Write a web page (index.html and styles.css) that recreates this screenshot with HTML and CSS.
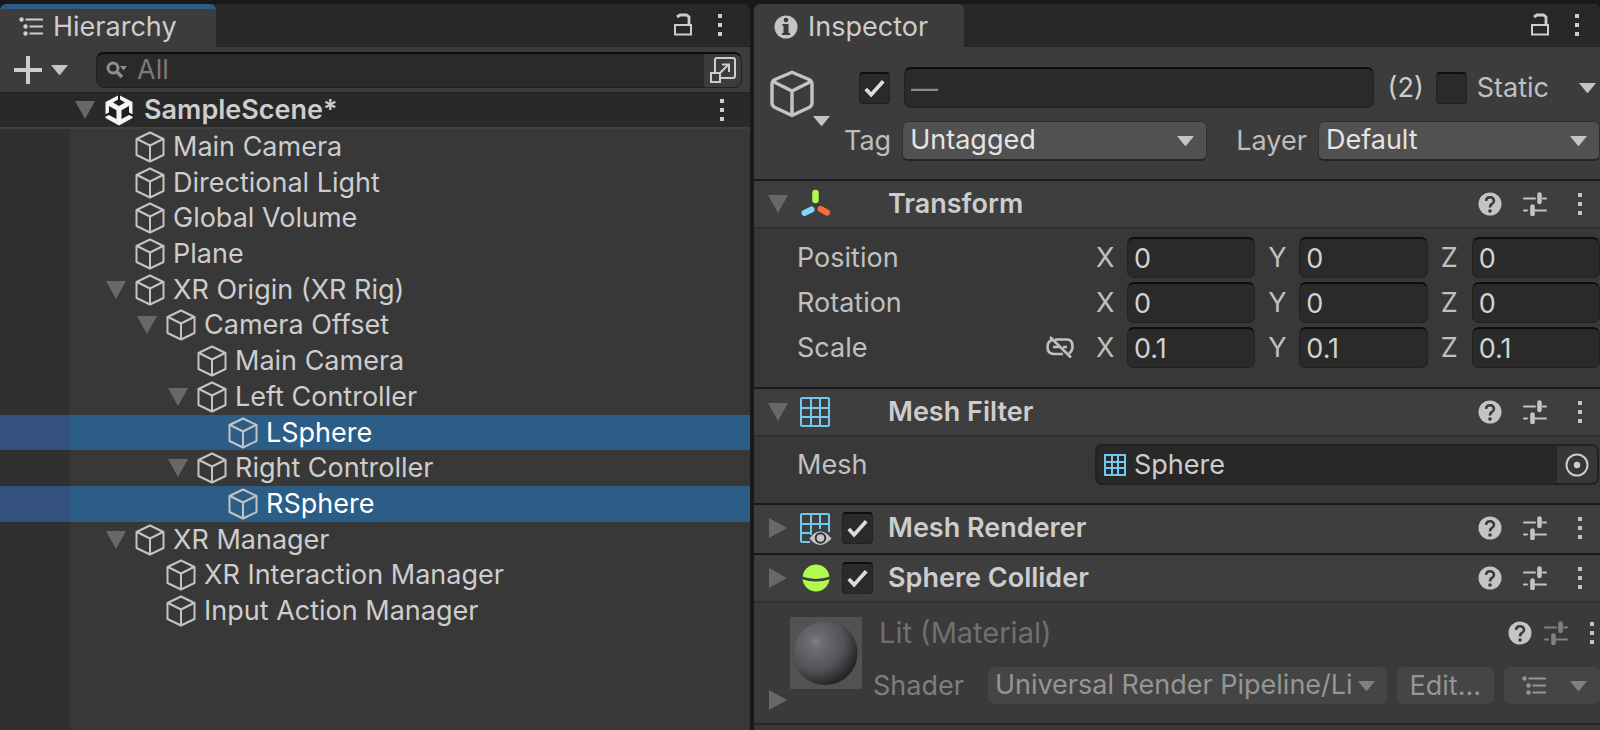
FILE: index.html
```html
<!DOCTYPE html>
<html lang="en">
<head>
<meta charset="utf-8">
<title>Hierarchy and Inspector</title>
<link rel="stylesheet" href="styles.css">
</head>
<body>
<svg class="sprite" aria-hidden="true">
  <symbol id="cube" viewBox="0 0 30 32"><g fill="none" stroke="currentColor" stroke-width="2" stroke-linejoin="round"><path d="M15 1.500 28.500 8V24L15 30.500 1.500 24V8Z"/><path d="M2 8 15 14.500 28 8M15 14.500V30"/></g></symbol>
  <symbol id="cube-bold" viewBox="0 0 44 48"><g fill="none" stroke="currentColor" stroke-width="3.400" stroke-linejoin="round"><path d="M22 2.200 39 9.500Q42 11 42 14V33Q42 36 39 37.500L22 45.500 5 37.500Q2 36 2 33V14Q2 11 5 9.500Z"/><path d="M3 11.500 22 21 41 11.500M22 21V45"/></g></symbol>
  <symbol id="down" viewBox="0 0 20 18"><path d="M0 0H20L10 18Z" fill="currentColor"/></symbol>
  <symbol id="right" viewBox="0 0 18 20"><path d="M0 0 18 10 0 20Z" fill="currentColor"/></symbol>
  <symbol id="caret" viewBox="0 0 17 10"><path d="M0 0H17L9.500 9.200Q8.500 10.200 7.500 9.200Z" fill="currentColor"/></symbol>
  <symbol id="kebab" viewBox="0 0 6 24"><path d="M1 1H5V5H1ZM1 10H5V14H1ZM1 19H5V23H1Z" fill="currentColor"/></symbol>
  <symbol id="lock" viewBox="0 0 20 24"><g fill="none" stroke="currentColor" stroke-width="2"><path d="M2 12H18V21.500H2Z"/><path d="M16 12V4L13.500 2H7L4 4" stroke-width="2.800"/></g></symbol>
  <symbol id="list" viewBox="0 0 24 20"><g fill="currentColor"><circle cx="2.500" cy="2.500" r="2.200"/><circle cx="6.500" cy="9.500" r="2.200"/><circle cx="6.500" cy="16.500" r="2.200"/><path d="M6.500 1.500H24V3.500H6.500ZM10.500 8.500H24V10.500H10.500ZM10.500 15.500H24V17.500H10.500Z"/></g></symbol>
  <symbol id="help" viewBox="0 0 24 24"><circle cx="12" cy="12" r="11.500" fill="currentColor"/><path d="M8 8.800Q8.300 5.200 12 5.200T16 8.700Q16 10.700 13.800 12 12 13 12 15.500" fill="none" stroke="#3a3a3a" stroke-width="2.600"/><circle cx="12" cy="19" r="1.800" fill="#3a3a3a"/></symbol>
  <symbol id="sliders" viewBox="0 0 24 24"><path d="M1 6.500H12M20 6.500H23M1 18.500H4M12 18.500H23" stroke="currentColor" stroke-width="2" stroke-linecap="round"/><path d="M16.500 2.500V10M9.500 14.500V22" stroke="currentColor" stroke-width="4.600" stroke-linecap="round"/></symbol>
  <symbol id="grid" viewBox="0 0 30 30"><path d="M2 1H28Q29 1 29 2V28Q29 29 28 29H2Q1 29 1 28V2Q1 1 2 1ZM1 11H29M1 20H29M11 1V29M20 1V29" fill="none" stroke="#73c8ef" stroke-width="2"/></symbol>
  <symbol id="check" viewBox="0 0 32 32"><path d="M7 17 12.500 23 25 9" fill="none" stroke="#dcdcdc" stroke-width="3.800"/></symbol>
</svg>
<main class="editor">
  <section class="panel hierarchy" aria-label="Hierarchy">
    <header class="tabs">
      <button class="tab active"><svg class="i-list"><use href="#list"/></svg>Hierarchy</button>
      <div class="tab-tools">
        <button aria-label="Lock"><svg class="i-lock"><use href="#lock"/></svg></button>
        <button aria-label="More"><svg class="i-kebab"><use href="#kebab"/></svg></button>
      </div>
    </header>
    <div class="toolbar">
      <button class="add" aria-label="Create"><svg class="i-plus" viewBox="0 0 28 28"><path d="M14 0V28M0 14H28" stroke="currentColor" stroke-width="4"/></svg><svg class="i-caret"><use href="#caret"/></svg></button>
      <div class="search">
        <svg class="i-search" viewBox="0 0 22 18"><circle cx="7" cy="7" r="5" fill="none" stroke="currentColor" stroke-width="3"/><path d="M10.500 10.500 16 16" stroke="currentColor" stroke-width="3.500"/><path d="M14 5H21L17.500 9.500Z" fill="currentColor"/></svg>
        <input type="search" placeholder="All" aria-label="Search hierarchy">
        <button aria-label="Open search"><svg class="i-open" viewBox="0 0 28 28"><g fill="none" stroke="currentColor" stroke-width="2"><path d="M6 16V4Q6 2 8 2H24Q26 2 26 4V20Q26 22 24 22H12"/><path d="M2 17H11V26H2ZM10.500 17.500 19 9M13 8.500H20V16"/></g></svg></button>
      </div>
    </div>
    <div class="scene">
      <button class="fold" aria-label="Collapse"><svg class="i-down"><use href="#down"/></svg></button>
      <svg class="i-unity" viewBox="0 0 28 32"><path d="M14 1 27.500 8V24L14 31.500 .500 24V8Z" fill="#f4f4f4"/><path d="M13 0H15V5.500L20 8.500 14 12 8 8.500 13 5.500ZM4 12 11.500 16.200V25L4 21 0 22.800V20.500L4 18.500ZM24 12 16.500 16.200V25L24 21 28 22.800V20.500L24 18.500Z" fill="#1e1e1e"/></svg>
      <h2>SampleScene*</h2>
      <button class="scene-more" aria-label="Scene options"><svg class="i-kebab"><use href="#kebab"/></svg></button>
    </div>
    <ul class="tree">
      <li class="l1"><span class="fold"></span><svg class="i-cube"><use href="#cube"/></svg>Main Camera</li>
      <li class="l1"><span class="fold"></span><svg class="i-cube"><use href="#cube"/></svg>Directional Light</li>
      <li class="l1"><span class="fold"></span><svg class="i-cube"><use href="#cube"/></svg>Global Volume</li>
      <li class="l1"><span class="fold"></span><svg class="i-cube"><use href="#cube"/></svg>Plane</li>
      <li class="l1"><button class="fold" aria-label="Collapse"><svg class="i-down"><use href="#down"/></svg></button><svg class="i-cube"><use href="#cube"/></svg>XR Origin (XR Rig)</li>
      <li class="l2"><button class="fold" aria-label="Collapse"><svg class="i-down"><use href="#down"/></svg></button><svg class="i-cube"><use href="#cube"/></svg>Camera Offset</li>
      <li class="l3"><span class="fold"></span><svg class="i-cube"><use href="#cube"/></svg>Main Camera</li>
      <li class="l3"><button class="fold" aria-label="Collapse"><svg class="i-down"><use href="#down"/></svg></button><svg class="i-cube"><use href="#cube"/></svg>Left Controller</li>
      <li class="l4 selected"><span class="fold"></span><svg class="i-cube"><use href="#cube"/></svg>LSphere</li>
      <li class="l3"><button class="fold" aria-label="Collapse"><svg class="i-down"><use href="#down"/></svg></button><svg class="i-cube"><use href="#cube"/></svg>Right Controller</li>
      <li class="l4 selected"><span class="fold"></span><svg class="i-cube"><use href="#cube"/></svg>RSphere</li>
      <li class="l1"><button class="fold" aria-label="Collapse"><svg class="i-down"><use href="#down"/></svg></button><svg class="i-cube"><use href="#cube"/></svg>XR Manager</li>
      <li class="l2"><span class="fold"></span><svg class="i-cube"><use href="#cube"/></svg>XR Interaction Manager</li>
      <li class="l2"><span class="fold"></span><svg class="i-cube"><use href="#cube"/></svg>Input Action Manager</li>
    </ul>
  </section>

  <section class="panel inspector" aria-label="Inspector">
    <header class="tabs">
      <button class="tab"><svg class="i-info" viewBox="0 0 24 24"><circle cx="12" cy="12" r="11.500" fill="currentColor"/><circle cx="12" cy="5" r="2.300" fill="#3a3a3a"/><path d="M8.500 9H14.500V18H16V20H8V18H9.500V11H8.500Z" fill="#3a3a3a"/></svg>Inspector</button>
      <div class="tab-tools">
        <button aria-label="Lock"><svg class="i-lock"><use href="#lock"/></svg></button>
        <button aria-label="More"><svg class="i-kebab"><use href="#kebab"/></svg></button>
      </div>
    </header>
    <div class="object">
      <button class="object-icon" aria-label="Select icon"><svg class="i-cube-big"><use href="#cube-bold"/></svg><svg class="i-caret"><use href="#caret"/></svg></button>
      <div class="object-fields">
        <div class="name-row">
          <span class="tick"><input type="checkbox" checked aria-label="Active"><svg><use href="#check"/></svg></span>
          <input class="field name" type="text" value="" placeholder="—" aria-label="Name">
          <span class="count">(2)</span>
          <span class="tick"><input type="checkbox" id="static"><svg><use href="#check"/></svg></span>
          <label class="static" for="static">Static</label>
          <button class="static-more" aria-label="Static options"><svg class="i-caret"><use href="#caret"/></svg></button>
        </div>
        <div class="tag-row">
          <label for="tag">Tag</label>
          <span class="drop tag"><select id="tag"><option>Untagged</option></select><svg class="i-caret"><use href="#caret"/></svg></span>
          <label class="layer-label" for="layer">Layer</label>
          <span class="drop layer"><select id="layer"><option>Default</option></select><svg class="i-caret"><use href="#caret"/></svg></span>
        </div>
      </div>
    </div>

    <article class="component">
      <header class="bar">
        <button class="fold" aria-label="Collapse"><svg class="i-down"><use href="#down"/></svg></button>
        <svg class="i-comp" viewBox="0 0 30 30"><g stroke-linecap="round" stroke-width="6"><path d="M15.500 4V11" stroke="#b0f94f" stroke-width="6.500"/><path d="M4.500 24 11.500 20.500" stroke="#7fd6fd"/><path d="M20.500 20 27 23.500" stroke="#fe6b3a"/></g></svg>
        <span class="tick-gap"></span>
        <h3>Transform</h3>
        <div class="actions"><button aria-label="Help"><svg class="i-24"><use href="#help"/></svg></button><button aria-label="Presets"><svg class="i-24"><use href="#sliders"/></svg></button><button aria-label="More"><svg class="i-kebab"><use href="#kebab"/></svg></button></div>
      </header>
      <div class="vectors">
        <div class="vector"><span class="prop">Position</span>
          <label>X<input class="field" type="text" value="0"></label><label>Y<input class="field" type="text" value="0"></label><label>Z<input class="field" type="text" value="0"></label></div>
        <div class="vector"><span class="prop">Rotation</span>
          <label>X<input class="field" type="text" value="0"></label><label>Y<input class="field" type="text" value="0"></label><label>Z<input class="field" type="text" value="0"></label></div>
        <div class="vector"><span class="prop">Scale<button aria-label="Constrain proportions"><svg class="i-link" viewBox="0 0 28 24"><g fill="none" stroke="currentColor" stroke-width="2.600"><path d="M8 4Q1.500 4 1.500 11T8 18H17M9 3.500H21Q26.500 3.500 26.500 10.500 26.500 15 23 17.500M7 11H13M17 11H21M4 1 25 21.500"/></g></svg></button></span>
          <label>X<input class="field" type="text" value="0.1"></label><label>Y<input class="field" type="text" value="0.1"></label><label>Z<input class="field" type="text" value="0.1"></label></div>
      </div>
    </article>

    <article class="component">
      <header class="bar">
        <button class="fold" aria-label="Collapse"><svg class="i-down"><use href="#down"/></svg></button>
        <svg class="i-comp"><use href="#grid"/></svg>
        <span class="tick-gap"></span>
        <h3>Mesh Filter</h3>
        <div class="actions"><button aria-label="Help"><svg class="i-24"><use href="#help"/></svg></button><button aria-label="Presets"><svg class="i-24"><use href="#sliders"/></svg></button><button aria-label="More"><svg class="i-kebab"><use href="#kebab"/></svg></button></div>
      </header>
      <div class="mesh">
        <label for="mesh">Mesh</label>
        <div class="object-field">
          <svg class="i-grid" viewBox="0 0 22 22"><path d="M1 1H21V21H1ZM1 8H21M1 14H21M8 1V21M14 1V21" fill="none" stroke="#73c8ef" stroke-width="2"/></svg>
          <input id="mesh" type="text" value="Sphere">
          <button aria-label="Pick mesh"><svg class="i-24" viewBox="0 0 24 24"><circle cx="12" cy="12" r="10.500" fill="none" stroke="currentColor" stroke-width="2"/><circle cx="12" cy="12" r="3.200" fill="currentColor"/></svg></button>
        </div>
      </div>
    </article>

    <article class="component">
      <header class="bar closed">
        <button class="fold" aria-label="Expand"><svg class="i-right"><use href="#right"/></svg></button>
        <svg class="i-comp" viewBox="0 0 30 30"><path d="M10 29H2Q1 29 1 28V2Q1 1 2 1H28Q29 1 29 2V19M1 11H29M1 20H12M11 1V22M20 1V16" fill="none" stroke="#73c8ef" stroke-width="2"/><path d="M9.500 25.500Q20 11 31.500 25.500 20 38.500 9.500 25.500Z" fill="#c4c4c4"/><circle cx="20.500" cy="25" r="4.800" fill="#c4c4c4" stroke="#333" stroke-width="2"/></svg>
        <span class="tick"><input type="checkbox" checked aria-label="Mesh Renderer enabled"><svg><use href="#check"/></svg></span>
        <h3>Mesh Renderer</h3>
        <div class="actions"><button aria-label="Help"><svg class="i-24"><use href="#help"/></svg></button><button aria-label="Presets"><svg class="i-24"><use href="#sliders"/></svg></button><button aria-label="More"><svg class="i-kebab"><use href="#kebab"/></svg></button></div>
      </header>
    </article>

    <article class="component">
      <header class="bar">
        <button class="fold" aria-label="Expand"><svg class="i-right"><use href="#right"/></svg></button>
        <svg class="i-comp" viewBox="0 0 30 30"><circle cx="16" cy="15" r="13.500" fill="#b0f94f"/><path d="M1 14.500Q16 20 31 14.500" fill="none" stroke="#3e3e3e" stroke-width="2.600"/></svg>
        <span class="tick"><input type="checkbox" checked aria-label="Sphere Collider enabled"><svg><use href="#check"/></svg></span>
        <h3>Sphere Collider</h3>
        <div class="actions"><button aria-label="Help"><svg class="i-24"><use href="#help"/></svg></button><button aria-label="Presets"><svg class="i-24"><use href="#sliders"/></svg></button><button aria-label="More"><svg class="i-kebab"><use href="#kebab"/></svg></button></div>
      </header>
    </article>

    <article class="material">
      <button class="fold" aria-label="Expand"><svg class="i-right"><use href="#right"/></svg></button>
      <svg class="thumb" viewBox="0 0 72 72"><defs><radialGradient id="ball" cx="0.350" cy="0.330" r="0.720"><stop offset="0" stop-color="#808184"/><stop offset="0.120" stop-color="#6c6e71"/><stop offset="0.600" stop-color="#515356"/><stop offset="0.950" stop-color="#252525"/></radialGradient></defs><path d="M0 0H72V72H0Z" fill="#525252"/><circle cx="35.500" cy="36" r="32.500" fill="url(#ball)" stroke="#4b5159" stroke-width="1"/></svg>
      <div class="material-body">
        <div class="material-title"><h4>Lit (Material)</h4>
          <div class="actions"><button aria-label="Help"><svg class="i-24"><use href="#help"/></svg></button><button class="dim" aria-label="Presets"><svg class="i-24"><use href="#sliders"/></svg></button><button aria-label="More"><svg class="i-kebab"><use href="#kebab"/></svg></button></div>
        </div>
        <div class="shader-row">
          <label for="shader">Shader</label>
          <span class="drop shader"><select id="shader" disabled><option>Universal Render Pipeline/Lit</option></select><svg class="i-caret"><use href="#caret"/></svg></span>
          <button class="soft" disabled>Edit...</button>
          <button class="soft menu" disabled aria-label="Shader list"><svg class="i-list"><use href="#list"/></svg><svg class="i-caret"><use href="#caret"/></svg></button>
        </div>
      </div>
    </article>
  </section>
</main>
</body>
</html>
```
FILE: styles.css
```css
* { box-sizing: border-box; }
body {
  margin: 0;
  background: #191919;
  color: #cdcdcd;
  font: 27px/34px Inter, "Liberation Sans", sans-serif;
  white-space: nowrap;
}
h2, h3, h4, ul { margin: 0; padding: 0; font-size: inherit; }
h2, h3 { font-weight: 600; }
button, input, select { font: inherit; color: inherit; }
button { display: flex; align-items: center; background: none; border: 0; padding: 0; }
input, select { min-width: 0; border: 0; background: none; outline: 0; appearance: none; }
svg { display: block; flex: none; }
.sprite { display: none; }

.i-list { width: 24px; height: 20px; }
.i-lock { width: 20px; height: 24px; }
.i-kebab { width: 6px; height: 24px; }
.i-plus { width: 28px; height: 28px; }
.i-caret { width: 17px; height: 10px; color: #c4c4c4; }
.i-search { width: 22px; height: 18px; color: #8e8e8e; }
.i-open { width: 28px; height: 28px; }
.i-unity { width: 28px; height: 32px; }
.i-down { width: 20px; height: 18px; }
.i-right { width: 18px; height: 20px; }
.i-cube { width: 30px; height: 32px; color: #c4c4c4; }
.i-cube-big { width: 44px; height: 48px; }
.i-info, .i-24 { width: 24px; height: 24px; }
.i-comp { width: 30px; height: 30px; overflow: visible; }
.i-grid { width: 22px; height: 22px; }
.i-link { width: 28px; height: 24px; }
.i-info, .actions, .i-cube-big { color: #c4c4c4; }
.fold { width: 20px; flex: none; color: #686868; justify-content: center; }

.editor { display: flex; gap: 4px; min-height: 100vh; padding-top: 4px; }
.panel { min-width: 0; background: #383838; border-radius: 6px 6px 0 0; overflow: hidden; }
.hierarchy { flex: 750 1 0; background: linear-gradient(90deg, #303030 70px, #383838 70px); }
.inspector { flex: 846 1 0; }

.tabs { display: flex; justify-content: space-between; height: 43px; background: #282828; border-bottom: 1px solid #232323; }
.tab { gap: 10px; height: 43px; padding: 1px 39px 0 19px; background: #3c3c3c; border-radius: 6px 6px 0 0; }
.inspector .tab { padding: 2px 36px 0 20px; }
.tab.active { border-top: 5px solid #2c5d87; padding-bottom: 3px; }
.tab-tools { display: flex; align-items: center; gap: 24px; padding-right: 27px; }
.inspector .tab-tools { padding-right: 20px; }

.toolbar { display: flex; align-items: center; gap: 28px; height: 46px; padding: 0 8px 0 14px; background: #3c3c3c; border-bottom: 1px solid #222; }
.add { gap: 9px; }
.search { display: flex; flex: 1; align-items: center; height: 36px; padding-left: 9px; background: #2a2a2a; border: 1px solid #212121; border-top: 2px solid #0d0d0d; border-radius: 8px; overflow: hidden; }
.search input { flex: 1; padding: 0 0 0 9px; }
.search input::placeholder { color: #7a7a7a; opacity: 1; }
.search button { align-self: stretch; justify-content: center; width: 37px; background: #3c3c3c; }

.scene { display: flex; align-items: center; height: 36px; padding: 0 25px 0 75px; background: #292929; border-bottom: 2px solid #404040; }
.scene .i-unity { margin: 0 11px 0 10px; }
.scene-more { margin-left: auto; }

.tree { display: grid; grid-auto-rows: 1fr; height: 500px; list-style: none; }
.tree li { display: flex; align-items: center; gap: 8px; }
.tree .fold { margin-right: 1px; }
.l1 { padding-left: 106px; }
.l2 { padding-left: 137px; }
.l3 { padding-left: 168px; }
.l4 { padding-left: 199px; }
.tree .selected { color: #fff; background: linear-gradient(90deg, #35527e 70px, #2c5d87 70px); }

.field { height: 41px; padding: 1px 6px 0; background: #2a2a2a; border: 1px solid #212121; border-top: 2px solid #0d0d0d; border-radius: 7px; color: #d2d2d2; }
.tick { display: grid; width: 31px; height: 32px; flex: none; }
.tick > * { grid-area: 1 / 1; width: 100%; height: 100%; margin: 0; }
.tick input { background: #2a2a2a; border: 1px solid #212121; border-top: 2px solid #0d0d0d; border-radius: 4px; }
.tick svg { pointer-events: none; }
.tick input:not(:checked) + svg { visibility: hidden; }

.object { display: flex; padding: 20px 0 18px 16px; background: #3c3c3c; }
.object-icon { align-self: flex-start; align-items: flex-end; height: 59px; }
.object-icon .i-cube-big { align-self: flex-start; margin-top: 3px; }
.object-icon .i-caret { margin-left: -1px; }
.object-fields { display: grid; flex: 1; gap: 13px; padding-left: 14px; }
.name-row, .tag-row { display: flex; align-items: center; }
.name-row { padding: 0 4px 0 15px; }
.name { flex: 1; margin: 0 14px; }
.name::placeholder { color: #8a8a8a; opacity: 1; }
.count { margin-right: 12px; }
.static { margin-left: 10px; }
.static-more { margin-left: 30px; }
.tag-row label { margin-right: 11px; color: #bdbdbd; }
.tag-row .layer-label { margin-left: 29px; }
.static, .prop, .vector label, .mesh label { color: #c0c0c0; }
.drop { display: grid; grid-template-columns: 1fr; align-items: center; min-width: 0; }
.drop > * { grid-area: 1 / 1; }
.drop .i-caret { justify-self: end; margin-right: 13px; pointer-events: none; }
.drop select { width: 100%; height: 40px; padding: 0 32px 2px 7px; background: #515151; border: 1px solid #303030; border-bottom: 2px solid #242424; border-radius: 6px; color: #e4e4e4; }
.tag { flex: 304 1 0; }
.layer { flex: 281 1 0; }

.component, .material { border-top: 2px solid #1a1a1a; }
.bar { display: flex; align-items: center; height: 48px; padding: 0 17px 0 14px; background: #3e3e3e; border-bottom: 2px solid #303030; }
.bar.closed { border-bottom: 0; padding-bottom: 2px; }
.bar .i-comp { margin: 0 12px 0 12px; }
.tick-gap { width: 31px; }
.bar h3 { margin-left: 15px; }
.actions { display: flex; align-items: center; gap: 21px; margin-left: auto; }
.actions button:last-child { margin-left: 9px; }

.vectors { display: grid; gap: 4px; padding: 8px 0 19px; }
.vector { display: grid; grid-template-columns: 286px repeat(3, 1fr); column-gap: 13px; align-items: center; padding-left: 43px; }
.prop { display: flex; align-items: center; justify-content: space-between; padding-right: 9px; }
.vector label { display: grid; grid-template-columns: 31px 1fr; align-items: center; }
.vector .field { width: 100%; }

.mesh { display: grid; grid-template-columns: 298px 1fr; align-items: center; padding: 7px 1px 18px 43px; }
.object-field { display: flex; align-items: center; height: 41px; padding-left: 7px; background: #282828; border: 2px solid #212121; border-radius: 7px; overflow: hidden; }
.object-field input { flex: 1; padding: 0 0 0 8px; }
.object-field button { align-self: stretch; justify-content: center; width: 40px; background: #373737; }

.material { display: flex; padding: 14px 0 18px 14px; border-top: 0; border-bottom: 2px solid #282828; background: #3a3a3a; color: #707070; }
.material .fold { align-self: flex-end; margin-bottom: -5px; }
.thumb { width: 72px; height: 72px; margin: 0 11px 0 2px; }
.material-body { flex: 1; min-width: 0; display: grid; gap: 17px; margin-top: -1px; }
.material-title { display: flex; align-items: center; padding: 0 5px 0 6px; }
.material h4 { font-size: 29px; font-weight: 400; }
.material .actions { gap: 12px; }
.material .actions .dim { color: #808080; }
.shader-row { display: flex; align-items: center; gap: 10px; }
.shader-row label { margin-right: 14px; color: #7e7e7e; }
.shader { flex: 1; }
.shader select, .soft { height: 38px; background: #454545; border: 0; border-bottom: 1px solid #363636; border-radius: 6px; color: #959595; opacity: 1; }
.shader select { padding-right: 34px; }
.shader-row .i-caret { color: #808080; }
.shader .i-caret { margin-right: 12px; }
.soft { padding: 0 13px; }
.menu { justify-content: space-between; width: 96px; padding: 0 13px 0 18px; }
```
